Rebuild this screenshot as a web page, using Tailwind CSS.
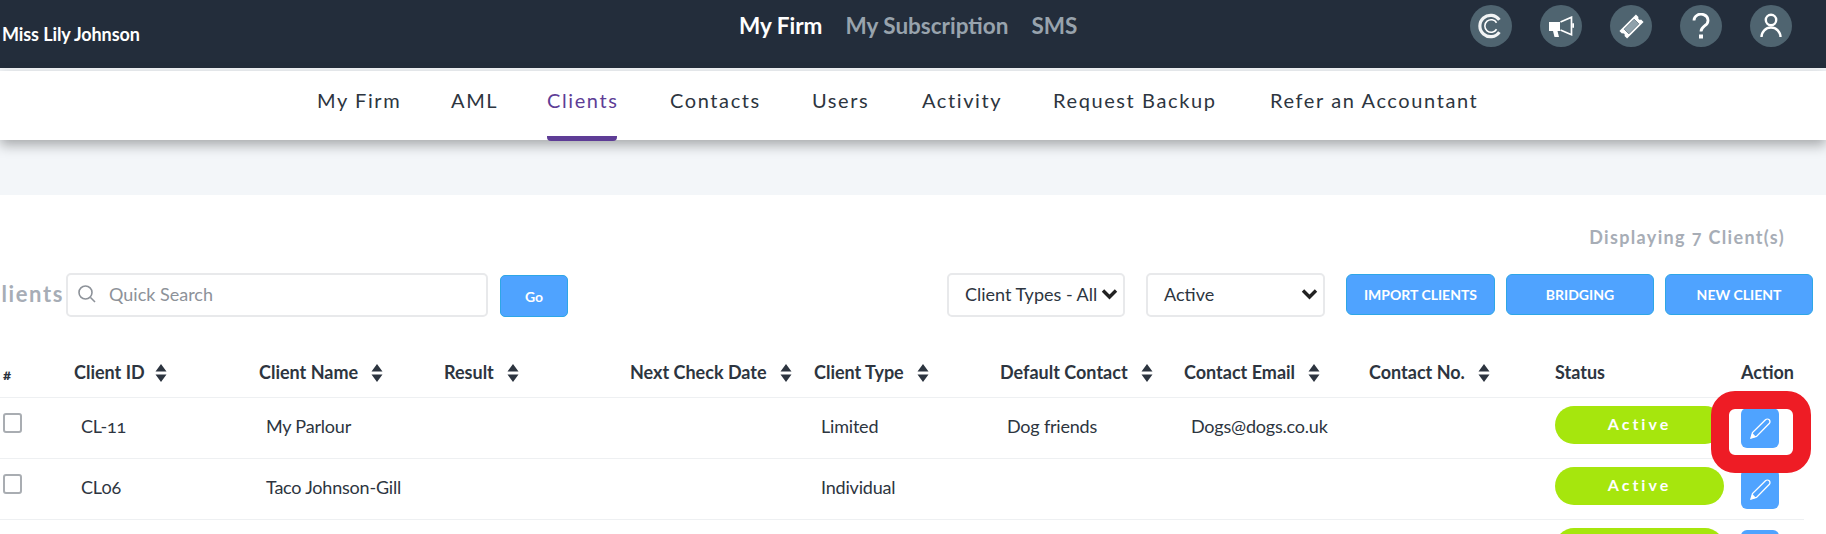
<!doctype html>
<html lang="en">
<head>
<meta charset="utf-8">
<script src="https://cdn.jsdelivr.net/npm/@tailwindcss/browser@4"></script>
<title>Clients</title>
</head>
<body class="font-['Lato','Noto_Sans',sans-serif] bg-white text-[#2d3540] oldstyle-nums">
<div class="relative w-[1826px] h-[534px] overflow-hidden bg-white">

  <header class="relative h-[68px] bg-[#232d3b] flex items-start">
    <div class="w-[630px] pl-[2px] pt-[22px] text-[18px] leading-[24px] font-bold text-white tracking-[-0.1px]">Miss Lily Johnson</div>
    <nav class="absolute left-[739px] top-[12px] flex gap-[23px] text-[22.5px] leading-[28px] font-bold text-[#98a3ad]">
      <a class="text-white">My Firm</a><a>My Subscription</a><a>SMS</a>
    </nav>
    <div class="absolute left-[1470px] top-[5px] flex gap-[28px]">
      <span class="w-[42px] h-[42px] rounded-full bg-[#4f6470] flex items-center justify-center">
        <svg class="w-[26px] h-[26px]" viewBox="0 0 28 28" fill="none" stroke="#fff"><path d="M23 7.500A11.500 11.500 0 1 0 23 20.500" stroke-width="3.400" stroke-opacity="0.92"/><path d="M20 10.500A6.800 6.800 0 1 0 20 17.500" stroke-width="1.700"/></svg>
      </span>
      <span class="w-[42px] h-[42px] rounded-full bg-[#4f6470] flex items-center justify-center">
        <svg class="w-[25px] h-[21px]" viewBox="0 0 25 21" fill="#fff"><path d="M0 6h11v9H8.500l1.500 6H5.500L4 15H0z"/><path d="M11.500 6L22.500 1.200v17.600l-11-4.800" fill="none" stroke="#fff" stroke-width="1.700"/><rect x="23.200" y="7" width="1.800" height="5" rx="0.900"/></svg>
      </span>
      <span class="w-[42px] h-[42px] rounded-full bg-[#4f6470] flex items-center justify-center">
        <svg class="w-[25px] h-[25px]" viewBox="0 0 30 30"><g transform="rotate(-45 15 15)"><path d="M1 8.500h28v4.300a2.300 2.300 0 0 0 0 4.400v4.300H1v-4.300a2.300 2.300 0 0 0 0-4.400z" fill="#fff"/><rect x="6.500" y="11" width="17" height="8" fill="#8fa1ab" stroke="#4f6470" stroke-width="0.800"/></g></svg>
      </span>
      <span class="w-[42px] h-[42px] rounded-full bg-[#4f6470] flex items-center justify-center">
        <svg class="w-[20px] h-[26px]" viewBox="0 0 20 26" fill="none" stroke="#fff" stroke-width="2.800"><path d="M3 7.500a7 6.200 0 1 1 11 5c-2.500 2-4 3-4 6"/><rect x="8" y="21.500" width="4" height="4" fill="#fff" stroke="none"/></svg>
      </span>
      <span class="w-[42px] h-[42px] rounded-full bg-[#4f6470] flex items-center justify-center">
        <svg class="w-[26px] h-[28px]" viewBox="0 0 26 28" fill="none" stroke="#fff" stroke-width="2.400"><circle cx="13" cy="8" r="5.200"/><path d="M3.500 25a9.500 9.500 0 0 1 19 0"/></svg>
      </span>
    </div>
  </header>

  <div class="h-[3px] bg-[#f3f6f9]"></div>

  <nav class="relative z-10 h-[69px] bg-white shadow-[0_5px_12px_rgba(0,0,0,0.32)] pl-[317px] grid grid-cols-[134px_96px_123px_142px_110px_131px_217px_212px] text-[20px] tracking-[1.6px] text-[#2d3540]">
    <a class="w-fit h-[69px] pt-[15px] leading-[28px]">My Firm</a>
    <a class="w-fit h-[69px] pt-[15px] leading-[28px]">AML</a>
    <a class="w-[70px] h-[70px] pt-[15px] leading-[28px] whitespace-nowrap text-[#5e3d96] border-b-[5px] border-[#5e3d96] rounded-b-[4px]">Clients</a>
    <a class="w-fit h-[69px] pt-[15px] leading-[28px]">Contacts</a>
    <a class="w-fit h-[69px] pt-[15px] leading-[28px]">Users</a>
    <a class="w-fit h-[69px] pt-[15px] leading-[28px]">Activity</a>
    <a class="w-fit h-[69px] pt-[15px] leading-[28px]">Request Backup</a>
    <a class="w-fit h-[69px] pt-[15px] leading-[28px] whitespace-nowrap">Refer an Accountant</a>
  </nav>

  <div class="h-[55px] bg-[#f3f6f9]"></div>

  <main>
    <div class="h-[78px] pr-[41px] pt-[30px] flex justify-end text-[18px] leading-[24px] font-bold tracking-[1.35px] text-[#a7adb6]">Displaying 7 Client(s)</div>

    <div class="h-[44px] flex items-start pr-[13px]">
      <div class="w-[66px] h-[44px] overflow-hidden flex justify-end text-[22px] leading-[41px] font-bold tracking-[1.6px] text-[#a7adb6] pr-[2px]"><span class="whitespace-nowrap">Clients</span></div>
      <div class="w-[422px] h-[44px] pb-[2px] rounded-[5px] border-2 border-[#e8e9eb] flex items-center pl-[9px] gap-[12px] text-[18px] text-[#8d9299]">
        <svg class="w-[20px] h-[20px]" viewBox="0 0 20 20" fill="none" stroke="#8d9299" stroke-width="1.600"><circle cx="8.500" cy="8.500" r="6.500"/><path d="M13.500 13.500L18 18"/></svg>
        <span>Quick Search</span>
      </div>
      <button class="ml-[12px] mt-[2px] w-[68px] h-[42px] rounded-[5px] bg-[#4fa3ff] border border-[#2ea6e6] text-white text-[14px] font-bold">Go</button>
      <div class="ml-[379px] w-[178px] h-[44px] pb-[2px] rounded-[5px] border-2 border-[#e8e9eb] flex items-center justify-between pl-[16px] pr-[5px] text-[18px]">
        <span class="whitespace-nowrap">Client Types - All</span>
        <svg class="w-[17px] h-[12px] shrink-0" viewBox="0 0 17 12" fill="none" stroke="#222" stroke-width="3.400"><path d="M2 2.500l6.500 6.500L15 2.500"/></svg>
      </div>
      <div class="ml-[21px] w-[179px] h-[44px] pb-[2px] rounded-[5px] border-2 border-[#e8e9eb] flex items-center justify-between pl-[16px] pr-[5px] text-[18px]">
        <span>Active</span>
        <svg class="w-[17px] h-[12px] shrink-0" viewBox="0 0 17 12" fill="none" stroke="#222" stroke-width="3.400"><path d="M2 2.500l6.500 6.500L15 2.500"/></svg>
      </div>
      <button class="ml-[21px] w-[149px] h-[41px] mt-[1px] rounded-[6px] bg-[#4fa3ff] border border-[#2ea6e6] text-white text-[14px] font-bold">IMPORT CLIENTS</button>
      <button class="ml-[11px] w-[148px] h-[41px] mt-[1px] rounded-[6px] bg-[#4fa3ff] border border-[#2ea6e6] text-white text-[14px] font-bold">BRIDGING</button>
      <button class="ml-[11px] w-[148px] h-[41px] mt-[1px] rounded-[6px] bg-[#4fa3ff] border border-[#2ea6e6] text-white text-[14px] font-bold">NEW CLIENT</button>
    </div>

    <div class="w-[1804px] mt-[23px]">
      <div class="grid grid-cols-[71px_185px_185px_186px_184px_186px_184px_185px_186px_186px_1fr] h-[58px] pl-[3px] border-b border-[#eef0f2] items-center text-[18px] font-bold text-[#2d3540] pt-[8px]">
        <span class="text-[15px] mt-[3px]">#</span>
        <span class="flex items-center gap-[10px]">Client ID<svg class="w-[12px] h-[18px]" viewBox="0 0 12 18" fill="#2d3540"><path d="M6 0l5.500 7.500H.5zM6 18L.5 10.500h11z"/></svg></span>
        <span class="flex items-center gap-[13px]">Client Name<svg class="w-[12px] h-[18px]" viewBox="0 0 12 18" fill="#2d3540"><path d="M6 0l5.500 7.500H.5zM6 18L.5 10.500h11z"/></svg></span>
        <span class="flex items-center gap-[13px]">Result<svg class="w-[12px] h-[18px]" viewBox="0 0 12 18" fill="#2d3540"><path d="M6 0l5.500 7.500H.5zM6 18L.5 10.500h11z"/></svg></span>
        <span class="flex items-center gap-[13px]">Next Check Date<svg class="w-[12px] h-[18px]" viewBox="0 0 12 18" fill="#2d3540"><path d="M6 0l5.500 7.500H.5zM6 18L.5 10.500h11z"/></svg></span>
        <span class="flex items-center gap-[13px]">Client Type<svg class="w-[12px] h-[18px]" viewBox="0 0 12 18" fill="#2d3540"><path d="M6 0l5.500 7.500H.5zM6 18L.5 10.500h11z"/></svg></span>
        <span class="flex items-center gap-[13px]">Default Contact<svg class="w-[12px] h-[18px]" viewBox="0 0 12 18" fill="#2d3540"><path d="M6 0l5.500 7.500H.5zM6 18L.5 10.500h11z"/></svg></span>
        <span class="flex items-center gap-[13px]">Contact Email<svg class="w-[12px] h-[18px]" viewBox="0 0 12 18" fill="#2d3540"><path d="M6 0l5.500 7.500H.5zM6 18L.5 10.500h11z"/></svg></span>
        <span class="flex items-center gap-[13px]">Contact No.<svg class="w-[12px] h-[18px]" viewBox="0 0 12 18" fill="#2d3540"><path d="M6 0l5.500 7.500H.5zM6 18L.5 10.500h11z"/></svg></span>
        <span>Status</span>
        <span>Action</span>
      </div>

      <div class="grid grid-cols-[71px_185px_185px_186px_184px_186px_184px_185px_186px_186px_1fr] h-[61px] pl-[3px] border-b border-[#eef0f2] items-center text-[18px] tracking-[-0.2px]">
        <span class="w-[19px] h-[20px] -mt-[10px] rounded-[3px] border-2 border-[#a9adb2]"></span>
        <span class="pl-[7px] pb-[4px]">CL-11</span>
        <span class="pl-[7px] pb-[4px]">My Parlour</span>
        <span></span><span></span>
        <span class="pl-[7px] pb-[4px]">Limited</span>
        <span class="pl-[7px] pb-[4px]">Dog friends</span>
        <span class="pl-[7px] pb-[4px]">Dogs@dogs.co.uk</span>
        <span></span>
        <span class="w-[169px] h-[38px] -mt-[6px] rounded-full bg-[#a6e60d] flex items-center justify-center text-white text-[16px] font-bold tracking-[3px] pb-[3px]">Active</span>
        <span class="w-[38px] h-[40px] rounded-[6px] bg-[#4fa3ff] flex items-center justify-center">
          <svg class="w-[21px] h-[21px]" viewBox="0 0 21 21" fill="none" stroke="#fff" stroke-width="1.300"><path d="M1 20l1.500-5.500L15.500 1.800a2.400 2.400 0 0 1 3.700 3.700L6.500 18.500z"/><path d="M.5 20.500l1.800-5.500 3.700 3.700z" fill="#fff" stroke="none"/></svg>
        </span>
      </div>

      <div class="grid grid-cols-[71px_185px_185px_186px_184px_186px_184px_185px_186px_186px_1fr] h-[61px] pl-[3px] border-b border-[#eef0f2] items-center text-[18px] tracking-[-0.2px]">
        <span class="w-[19px] h-[20px] -mt-[10px] rounded-[3px] border-2 border-[#a9adb2]"></span>
        <span class="pl-[7px] pb-[4px]">CL06</span>
        <span class="pl-[7px] pb-[4px]">Taco Johnson-Gill</span>
        <span></span><span></span>
        <span class="pl-[7px] pb-[4px]">Individual</span>
        <span></span><span></span><span></span>
        <span class="w-[169px] h-[38px] -mt-[6px] rounded-full bg-[#a6e60d] flex items-center justify-center text-white text-[16px] font-bold tracking-[3px] pb-[3px]">Active</span>
        <span class="w-[38px] h-[40px] rounded-[6px] bg-[#4fa3ff] flex items-center justify-center">
          <svg class="w-[21px] h-[21px]" viewBox="0 0 21 21" fill="none" stroke="#fff" stroke-width="1.300"><path d="M1 20l1.500-5.500L15.500 1.800a2.400 2.400 0 0 1 3.700 3.700L6.500 18.500z"/><path d="M.5 20.500l1.800-5.500 3.700 3.700z" fill="#fff" stroke="none"/></svg>
        </span>
      </div>

      <div class="grid grid-cols-[71px_185px_185px_186px_184px_186px_184px_185px_186px_186px_1fr] h-[61px] pl-[3px] items-start pt-[8px]">
        <span class="col-start-10 w-[169px] h-[38px] rounded-full bg-[#a6e60d]"></span>
        <span class="w-[38px] h-[39px] mt-[2px] rounded-[6px] bg-[#4fa3ff]"></span>
      </div>
    </div>
  </main>

  <div class="absolute left-[1711px] top-[391px] w-[100px] h-[82px] rounded-[24px] border-[18px] border-[#ee1c25] pointer-events-none"></div>
</div>
</body>
</html>
